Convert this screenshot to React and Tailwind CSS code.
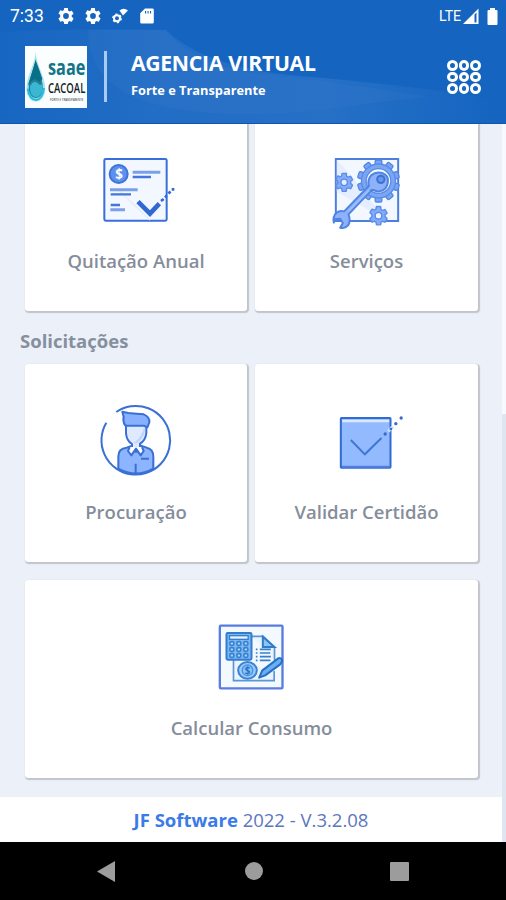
import React from "react";

const GEAR =
  "M19.14 12.94c.04-.3.06-.61.06-.94s-.02-.64-.07-.94l2.03-1.58a.49.49 0 0 0 .12-.61l-1.92-3.32a.49.49 0 0 0-.59-.22l-2.39.96a7 7 0 0 0-1.62-.94l-.36-2.54A.48.48 0 0 0 13.92 2h-3.84a.48.48 0 0 0-.47.41l-.36 2.54c-.59.24-1.13.57-1.62.94l-2.39-.96a.48.48 0 0 0-.59.22L2.74 8.47a.48.48 0 0 0 .12.61l2.03 1.58a6 6 0 0 0 0 2.68l-2.03 1.58a.49.49 0 0 0-.12.61l1.92 3.32c.12.22.37.29.59.22l2.39-.96c.5.38 1.03.7 1.62.94l.36 2.54c.05.24.24.41.48.41h3.84c.24 0 .44-.17.47-.41l.36-2.54a7 7 0 0 0 1.62-.94l2.39.96c.22.08.47 0 .59-.22l1.92-3.32a.48.48 0 0 0-.12-.61zM12 15.6a3.6 3.6 0 1 1 0-7.2 3.6 3.6 0 0 1 0 7.2z";

function Gear({ className }) {
  return (
    <svg viewBox="2 2 20 20" className={className} fill="currentColor">
      <path d={GEAR} />
    </svg>
  );
}

function StatusBar() {
  return (
    <div className="relative flex h-[31px] items-center pl-[10px] pr-[8px] pt-px text-white">
      <span className="w-[48px] font-['Roboto',sans-serif] text-[17.500px] leading-[20px]">7:33</span>
      <Gear className="h-4 w-4" />
      <Gear className="ml-[11px] h-4 w-4" />
      <svg viewBox="0 0 16 16" className="ml-[11px] h-4 w-4" fill="currentColor">
        <circle cx="5" cy="10.3" r="3" fill="none" stroke="currentColor" strokeWidth="2" />
        <circle cx="5" cy="10.3" r="4.3" fill="none" stroke="currentColor" strokeWidth="1.2" strokeDasharray="2.2 2.3" />
        <path d="M7.500 2.500Q11.800-1.200 16 2.500L11 7.500z" />
      </svg>
      <svg viewBox="0 0 14 16" className="ml-[12px] h-4 w-[14px]" fill="currentColor">
        <path
          fillRule="evenodd"
          d="M5 .5h7.500A1.300 1.300 0 0 1 13.800 1.800v12.400a1.300 1.300 0 0 1-1.300 1.300h-11A1.300 1.300 0 0 1 .2 14.200V5.300zM5 3v2.600h1.100V3zM7.500 3v2.600h1.100V3zM10 3v2.600h1.100V3z"
        />
      </svg>
      <span className="ml-auto font-['Roboto',sans-serif] text-[14px] leading-[16px]">LTE</span>
      <svg viewBox="0 0 16 16" className="ml-[2px] h-4 w-4" fill="currentColor">
        <path fillRule="evenodd" d="M0 16 15.500.5V16zM11.500 6.500v8h2V4.500z" />
      </svg>
      <svg viewBox="0 0 11 17" className="ml-[8px] h-[17px] w-[11px]" fill="currentColor">
        <path d="M3 0h5v2h1.500q1 0 1 1v13q0 1-1 1h-8q-1 0-1-1V3q0-1 1-1H3z" />
      </svg>
    </div>
  );
}

function Logo() {
  return (
    <div className="flex h-[62px] w-[62px] bg-[#fbfefe]">
      <svg viewBox="0 0 186 186" className="h-[62px] w-[62px] overflow-visible">
        <path d="M32 18C30 54 4 92 4 128a28 38 0 0 0 57 0C61 94 35 60 32 18Z" fill="#a8e3ee" />
        <path d="M32 38C28 70 11 96 11 126a21 30 0 0 0 43 0C54 98 34 75 32 38Z" fill="#217f98" />
        <path d="M15 121Q26 101 38 112T53 108V130Q48 153 31 154Q13 148 15 121Z" fill="#3cb7d1" />
        <path d="M16 95 8 120Q25 92 36 103T52 98L43 72 32 43Z" fill="#087088" />
        <path d="M8 128Q14 163 34 162Q53 159 57 126" fill="none" stroke="#20bfe2" strokeWidth="6" />
        <g fontFamily="Open Sans, sans-serif">
          <text x="69" y="87" textLength="112" lengthAdjust="spacingAndGlyphs" fontSize="64" fontWeight="700" fill="#137489">saae</text>
          <text x="69" y="140" textLength="112" lengthAdjust="spacingAndGlyphs" fontSize="45" fontWeight="600" fill="#171b1d">CACOAL</text>
          <text x="75" y="164" textLength="100" lengthAdjust="spacingAndGlyphs" fontSize="12" fontWeight="600" fill="#555">FORTE E TRANSPARENTE</text>
        </g>
      </svg>
    </div>
  );
}

function Header() {
  return (
    <header className="relative h-[124px] bg-[#1464c0] font-['Open_Sans',sans-serif] text-white">
      <svg viewBox="0 0 506 124" className="absolute inset-0 h-[124px] w-[506px]">
        <defs>
          <linearGradient id="wave" x1="0" x2="1">
            <stop offset="0" stopColor="#1766c1" />
            <stop offset=".3" stopColor="#226dc5" />
            <stop offset=".65" stopColor="#2670c6" />
            <stop offset="1" stopColor="#1464c0" />
          </linearGradient>
        </defs>
        <path d="M0 32Q80 28 166 30Q205 68 300 76Q410 85 506 101V124H0Z" fill="url(#wave)" />
        <path d="M88 30Q88 84 150 103Q220 122 330 109Q390 100 430 97Q350 83 250 73Q190 61 166 30Z" fill="#3b7fce" opacity=".2" />
        <path d="M0 123.500h506" stroke="#0c57ad" />
      </svg>
      <StatusBar />
      <div className="relative flex items-start pl-[25px] pr-[25px] pt-[15px]">
        <Logo />
        <div className="ml-[17px] mt-[5px] h-[51px] w-[3px] bg-[#a9caf1]" />
        <div className="ml-[24px] mt-[3px]">
          <h1 className="whitespace-nowrap text-[21.200px] font-bold leading-[28px] tracking-[-0.320px]">AGENCIA VIRTUAL</h1>
          <p className="mt-[4px] whitespace-nowrap text-[12.800px] font-bold leading-[18px]">Forte e Transparente</p>
        </div>
        <div className="ml-auto mt-[14px] grid grid-cols-3 gap-x-[1px] gap-y-[1px]">
          {Array.from({ length: 9 }, (_, i) => (
            <span key={i} className="h-[10.700px] w-[10.700px] rounded-full border-[3px] border-white" />
          ))}
        </div>
      </div>
    </header>
  );
}

function CertificateIcon() {
  return (
    <svg viewBox="-12 0 300 270" className="h-[90px] w-[100px]" fill="none">
      <rect x="43" y="42" width="187" height="185" rx="4" fill="#f3f7ff" stroke="#3a6edb" strokeWidth="6" />
      <path d="M80 130 180 225" stroke="#e3edfc" strokeWidth="4" />
      <circle cx="86" cy="87" r="27" fill="#5d91ee" stroke="#3f73da" strokeWidth="6" />
      <text x="87" y="101" textAnchor="middle" fontFamily="Open Sans, sans-serif" fontSize="40" fontWeight="700" fill="#fff">$</text>
      <g strokeWidth="7">
        <path d="M128 82h83M60 134h83M61 194h44" stroke="#7ba0e8" strokeWidth="9" />
        <path d="M128 96h55M62 148h61M62 180h28" stroke="#4475dc" />
      </g>
      <path d="m144 170 36 36 28-30" stroke="#3267d6" strokeWidth="14" />
      <path d="m213 168 8-6M225 157l5-5M235 145l7-5M245 133h8" stroke="#3267d6" strokeWidth="8" />
    </svg>
  );
}

function Cog({ x, y, size, width }) {
  return (
    <g transform={`translate(${x} ${y}) scale(${size / 20}) translate(-12 -12)`}>
      <path d={GEAR} fill="#83abf8" stroke="#5a8ce6" strokeWidth={width} strokeLinejoin="round" />
    </g>
  );
}

function ServicesIcon() {
  const teeth = Array.from({ length: 10 }, (_, i) => i * 36);
  return (
    <svg viewBox="-10.500 0 300 270" className="h-[90px] w-[100px] overflow-visible" fill="none">
      <rect x="46" y="42" width="187" height="186" fill="#f3f7ff" stroke="#4d7fde" strokeWidth="6" />
      <path d="M49 45v95l145 83-95-123z" fill="#e4eeff" />
      <Cog x={71} y={112} size={54} width={1.5} />
      <Cog x={174} y={212} size={55} width={1.5} />
      {teeth.map((angle) => (
        <rect key={angle} x="164" y="45" width="20" height="20" rx="4" fill="#79a5f6" stroke="#5286e2" strokeWidth="4" transform={`rotate(${angle} 174 108)`} />
      ))}
      <circle cx="174" cy="108" r="44" fill="#f4f8ff" stroke="#5a8ce5" strokeWidth="18" />
      <circle cx="174" cy="108" r="44" stroke="#7ba6f6" strokeWidth="10" />
      <path
        d="M153 135 84 208q8 20-2 34-8 9-23 6l8-14-8-13-15 2-4 10q-4-19 8-30 10-8 23-4l74-76q-5-19 7-32 14-12 33-7 20 7 17 28-3 24-25 27-11 1-17-4Z"
        fill="#8db2fb" stroke="#4f84e0" strokeWidth="6" strokeLinejoin="round"
      />
      <path d="m83 199 63-63" stroke="#9dbefb" strokeWidth="5" />
      <circle cx="181" cy="103" r="11" fill="#6797f0" stroke="#3c72d2" strokeWidth="6" />
    </svg>
  );
}

function PersonIcon() {
  return (
    <svg viewBox="-12 0 300 270" className="h-[90px] w-[100px]" fill="none" stroke="#3a6fd6" strokeWidth="6" strokeLinejoin="round">
      <path d="M79 54A103 103 0 1 1 49 86" />
      <path d="M85 224v-37q0-24 25-26l19-7h22l19 7q20 4 20 27v36q-52 29-105 0Z" fill="#8db4ff" />
      <path d="M108 90v28q2 23 18 32v11l12 13 12-13v-12q16-9 19-31V90" fill="#dfeafe" />
      <path d="M140 148q19-12 24-34V94q-8 37-33 53Z" fill="#bed4ff" stroke="none" />
      <path d="M105 94q-7-12-4-26l-4-15 18 4q26 2 46 4 19 8 17 24l-6 15-10-5h-51Z" fill="#87b0ff" />
      <path d="m119 159-5 12 10 13 14-20 14 20 9-13-5-12" fill="#fff" />
      <path d="M137 209v28M153 194h24" />
    </svg>
  );
}

function ValidateIcon() {
  return (
    <svg viewBox="-10.500 0 300 270" className="h-[90px] w-[100px]" fill="none">
      <rect x="61" y="69" width="149" height="149" rx="2" fill="#93bafe" stroke="#316ad3" strokeWidth="6" />
      <path d="M65 78h141" stroke="#dbe8ff" strokeWidth="7" />
      <path d="M64 215h143" stroke="#547de0" strokeWidth="6" />
      <path d="m91 135 42 43 50-49" stroke="#3f76d4" strokeWidth="6" />
      <path d="m203 109 14-14" stroke="#c8dafb" strokeWidth="10" />
      <g fill="#356bcb">
        <circle cx="194" cy="117" r="5" />
        <circle cx="211" cy="102" r="4" />
        <circle cx="226" cy="86" r="5" />
        <circle cx="242" cy="69" r="5" />
      </g>
    </svg>
  );
}

function CalculatorIcon() {
  return (
    <svg viewBox="-10.500 0 300 270" className="h-[90px] w-[100px]" fill="none">
      <rect x="43" y="47" width="188" height="188" rx="3" fill="#f4f8ff" stroke="#587ddf" strokeWidth="7" />
      <path d="M84 149v63h122v-29M139 79h34l34 34v37" fill="#eaf4ff" stroke="#5a96d6" strokeWidth="5" />
      <path d="M172 80v31h35z" fill="#8dc5fa" stroke="#2f7ccc" strokeWidth="6" />
      <rect x="63" y="69" width="75" height="80" rx="4" fill="#7ab8f4" stroke="#337ccd" strokeWidth="6" />
      <rect x="72" y="77" width="56" height="11" fill="#e5f2ff" stroke="#367ec8" strokeWidth="4" />
      {[101, 119, 137].map((y) =>
        [79, 100, 121].map((x) => (
          <rect key={`${x}-${y}`} x={x - 6} y={y - 6} width="12" height="11" rx="4" fill="#a7d2fb" stroke="#3a81cf" strokeWidth="5" />
        ))
      )}
      <path d="M163 118h33M163 129h31M163 140h33M163 151h32" stroke="#3780cc" strokeWidth="5" />
      <path d="M151 118h5M151 129h5M151 140h5M151 151h5" stroke="#3780cc" strokeWidth="5" />
      <ellipse cx="126" cy="181" rx="28" ry="25" fill="#9accff" stroke="#3a83d1" strokeWidth="6" />
      <circle cx="126" cy="181" r="16" fill="#8ac1f8" stroke="#4b91da" strokeWidth="4" />
      <text x="126" y="191" textAnchor="middle" fontFamily="Open Sans, sans-serif" fontSize="29" fontWeight="700" fill="#2370c4">$</text>
      <path d="m161 203 9-21 48-37q9-3 12 5-1 8-6 13l-45 33Z" fill="#6caff0" stroke="#266fc6" strokeWidth="6" strokeLinejoin="round" />
    </svg>
  );
}

function Card({ icon, label, className, labelClass = "mt-[14px]" }) {
  return (
    <div className={`flex flex-col items-center rounded-[3px] bg-white shadow-[1px_1px_1px_1px_#c1c4cb] ${className}`}>
      {icon}
      <span className={`whitespace-nowrap text-[18.500px] font-semibold leading-[26px] text-[#858d9b] ${labelClass}`}>{label}</span>
    </div>
  );
}

export default function App() {
  return (
    <div className="flex h-[900px] w-[506px] flex-col overflow-hidden bg-[#ecf0f9] font-['Open_Sans',sans-serif]">
      <Header />
      <div className="flex h-[718px]">
        <div className="flex w-[502px] flex-col">
          <main className="h-[673px] overflow-hidden pl-[25px]">
            <div className="flex gap-[8px]">
              <Card className="h-[187px] w-[222px] rounded-t-none pt-[21px]" labelClass="mt-[13px]" icon={<CertificateIcon />} label="Quitação Anual" />
              <Card className="h-[187px] w-[223px] rounded-t-none pt-[21px]" labelClass="mt-[13px]" icon={<ServicesIcon />} label="Serviços" />
            </div>
            <h2 className="-ml-[5px] flex h-[53px] items-center pt-[6px] text-[18.500px] font-bold leading-[26px] text-[#858f9e]">Solicitações</h2>
            <div className="flex gap-[8px]">
              <Card className="h-[198px] w-[222px] pt-[30px]" labelClass="mt-[15px]" icon={<PersonIcon />} label="Procuração" />
              <Card className="h-[198px] w-[223px] pt-[31px]" icon={<ValidateIcon />} label="Validar Certidão" />
            </div>
            <Card className="mt-[18px] h-[198px] w-[453px] pt-[30px]" labelClass="mt-[15px]" icon={<CalculatorIcon />} label="Calcular Consumo" />
          </main>
          <footer className="flex h-[45px] items-center justify-center whitespace-nowrap bg-white pt-px text-[18.500px] leading-[26px] text-[#5c76c0]">
            <span>
              <b className="text-[#3b7be8]">JF Software</b> 2022 - V.3.2.08
            </span>
          </footer>
        </div>
        <div className="w-[4px] bg-[#f7f9fe] pt-[290px]">
          <div className="h-[428px] bg-[#e0e6f1]" />
        </div>
      </div>
      <nav className="flex h-[58px] items-center bg-black pl-[97px]">
        <svg viewBox="0 0 18 21" className="h-[21px] w-[18px]">
          <path d="M0 10.500 18 0v21z" fill="#9c9c9c" />
        </svg>
        <div className="ml-[130px] h-[18px] w-[18px] rounded-full bg-[#9c9c9c]" />
        <div className="ml-[127px] h-[19px] w-[19px] rounded-[1px] bg-[#9c9c9c]" />
      </nav>
    </div>
  );
}
